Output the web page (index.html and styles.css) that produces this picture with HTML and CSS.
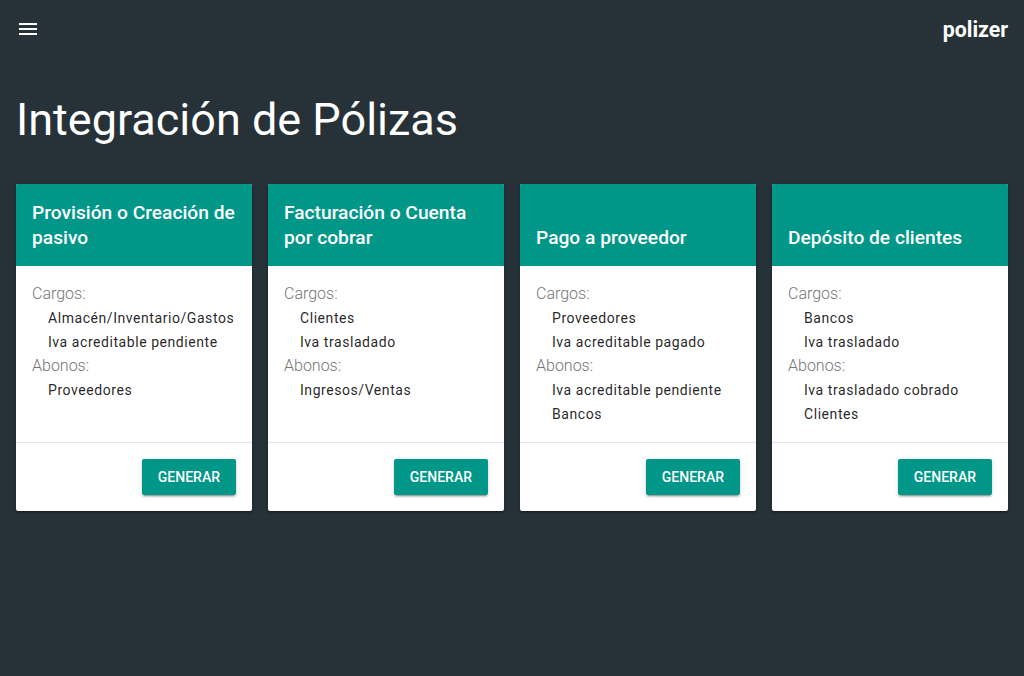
FILE: index.html
```html
<!DOCTYPE html>
<html lang="es">
<head>
<meta charset="utf-8">
<title>polizer</title>
<link rel="stylesheet" href="styles.css">
</head>
<body>
<header class="topbar">
  <button class="menu-btn" aria-label="menu">
    <svg width="24" height="24" viewBox="0 0 24 24"><path fill="#fff" d="M3 18h18v-2H3v2zm0-5h18v-2H3v2zm0-7v2h18V6H3z"/></svg>
  </button>
  <span class="brand">polizer</span>
</header>
<main class="content">
  <h1 class="page-title">Integración de Pólizas</h1>
  <div class="cards">
    <section class="card">
      <div class="card-head"><h2 class="card-title">Provisión o Creación de pasivo</h2></div>
      <div class="card-body">
        <div class="label">Cargos:</div>
        <div class="item">Almacén/Inventario/Gastos</div>
        <div class="item">Iva acreditable pendiente</div>
        <div class="label">Abonos:</div>
        <div class="item">Proveedores</div>
      </div>
      <div class="card-actions"><button class="btn">Generar</button></div>
    </section>
    <section class="card">
      <div class="card-head"><h2 class="card-title">Facturación o Cuenta por cobrar</h2></div>
      <div class="card-body">
        <div class="label">Cargos:</div>
        <div class="item">Clientes</div>
        <div class="item">Iva trasladado</div>
        <div class="label">Abonos:</div>
        <div class="item">Ingresos/Ventas</div>
      </div>
      <div class="card-actions"><button class="btn">Generar</button></div>
    </section>
    <section class="card">
      <div class="card-head"><h2 class="card-title">Pago a proveedor</h2></div>
      <div class="card-body">
        <div class="label">Cargos:</div>
        <div class="item">Proveedores</div>
        <div class="item">Iva acreditable pagado</div>
        <div class="label">Abonos:</div>
        <div class="item">Iva acreditable pendiente</div>
        <div class="item">Bancos</div>
      </div>
      <div class="card-actions"><button class="btn">Generar</button></div>
    </section>
    <section class="card">
      <div class="card-head"><h2 class="card-title">Depósito de clientes</h2></div>
      <div class="card-body">
        <div class="label">Cargos:</div>
        <div class="item">Bancos</div>
        <div class="item">Iva trasladado</div>
        <div class="label">Abonos:</div>
        <div class="item">Iva trasladado cobrado</div>
        <div class="item">Clientes</div>
      </div>
      <div class="card-actions"><button class="btn">Generar</button></div>
    </section>
  </div>
</main>
</body>
</html>
```
FILE: styles.css
```css
* { box-sizing: border-box; }
html, body {
  margin: 0;
  padding: 0;
  background: #263238;
  font-family: Roboto, "Liberation Sans", sans-serif;
  height: 100%;
}
.topbar {
  height: 56px;
  display: flex;
  align-items: center;
  justify-content: space-between;
  padding: 0 16px 0 16px;
}
.menu-btn {
  background: none;
  border: 0;
  padding: 0;
  width: 24px;
  height: 24px;
  display: flex;
  margin-top: 2px;
}
.brand {
  color: #fff;
  font-weight: 700;
  font-size: 21.3px;
  margin-right: 0;
  margin-top: 2px;
}
.content {
  padding: 0 16px;
}
.page-title {
  margin: 36px 0 36px 0;
  color: #fff;
  font-weight: 400;
  font-size: 45px;
  line-height: 56px;
}
.cards {
  display: grid;
  grid-template-columns: repeat(4, 1fr);
  gap: 16px;
}
.card {
  background: #fff;
  border-radius: 2px;
  display: flex;
  flex-direction: column;
  overflow: hidden;
  box-shadow: 0 2px 2px rgba(0,0,0,.14), 0 3px 1px -2px rgba(0,0,0,.2), 0 1px 5px rgba(0,0,0,.12);
}
.card-head {
  background: #009688;
  height: 82px;
  padding: 16px;
  display: flex;
  align-items: flex-end;
}
.card-title {
  margin: 0;
  color: #fff;
  font-size: 19.2px;
  font-weight: 500;
  line-height: 25px;
}
.card-body {
  flex: 1;
  padding: 16px 16px 16px 16px;
}
.label {
  color: #757575;
  font-size: 16px;
  font-weight: 300;
  line-height: 24px;
}
.item {
  color: rgba(0,0,0,.87);
  font-size: 14px;
  letter-spacing: 0.04em;
  line-height: 24px;
  padding-left: 16px;
}
.card-actions {
  border-top: 1px solid rgba(0,0,0,.1);
  padding: 16px;
  display: flex;
  justify-content: flex-end;
}
.btn {
  background: #009688;
  color: #fff;
  border: 0;
  border-radius: 2px;
  height: 36px;
  padding: 0 16px;
  min-width: 64px;
  font-family: Roboto, "Liberation Sans", sans-serif;
  font-size: 14px;
  font-weight: 500;
  text-transform: uppercase;
  letter-spacing: 0;
  box-shadow: 0 2px 2px rgba(0,0,0,.14), 0 3px 1px -2px rgba(0,0,0,.2), 0 1px 5px rgba(0,0,0,.12);
}
```
